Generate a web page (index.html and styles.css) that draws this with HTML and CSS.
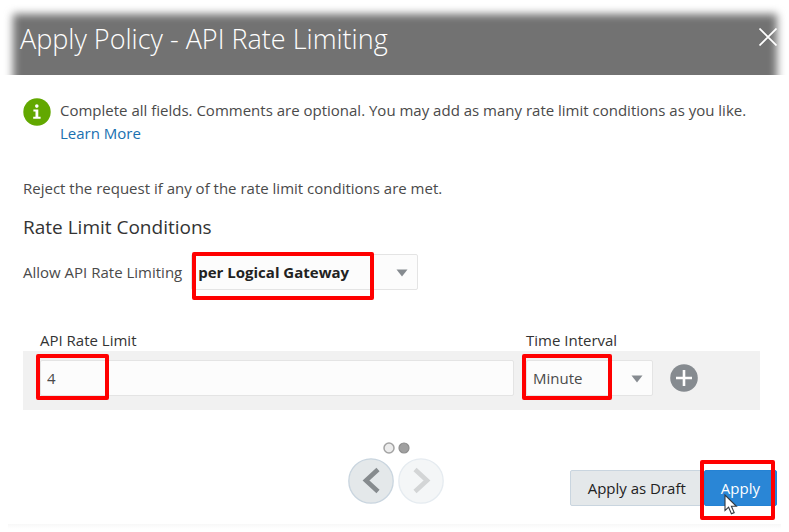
FILE: index.html
```html
<!DOCTYPE html>
<html lang="en">
<head>
<meta charset="utf-8">
<title>Apply Policy - API Rate Limiting</title>
<link rel="stylesheet" href="styles.css">
</head>
<body>
<div class="dialog" role="dialog" aria-labelledby="title">
  <header class="header">
    <h1 class="title" id="title">Apply Policy - API Rate Limiting</h1>
    <button class="close" type="button" aria-label="Close">
      <svg width="18" height="18" viewBox="0 0 18 18"><path d="M0.5 0.5 17.5 17.5M17.5 0.5 0.5 17.5" stroke="#fff" stroke-width="1.7" fill="none"/></svg>
    </button>
  </header>

  <main class="content">
    <div class="note">
      <svg class="info" width="28" height="28" viewBox="0 0 28 28"><circle cx="14" cy="14" r="13.7" fill="#62a800"/><path d="M10.4 11.4H15.3V18.7H17.6V20.8H10.2V18.7H12.5V13.4H10.4Z" fill="#fff"/><circle cx="13.8" cy="8.1" r="1.8" fill="#fff"/></svg>
      <p class="note-text">Complete all fields. Comments are optional. You may add as many rate limit conditions as you like.<br><a class="link" href="#">Learn More</a></p>
    </div>

    <p class="rule">Reject the request if any of the rate limit conditions are met.</p>
    <h2 class="section">Rate Limit Conditions</h2>

    <div class="scope">
      <label for="scope">Allow API Rate Limiting</label>
      <div class="field field-scope">
        <select class="control strong" id="scope"><option>per Logical Gateway</option></select>
        <svg class="arrow" width="12" height="8" viewBox="0 0 12 8"><path d="M0.5 0.5H11.5L6 7.5Z" fill="#868b90"/></svg>
        <span class="mark mark-scope"></span>
      </div>
    </div>

    <div class="limits-head">
      <label for="limit">API Rate Limit</label>
      <label for="interval">Time Interval</label>
    </div>
    <div class="limits-row">
      <div class="field">
        <input class="control" id="limit" type="text" value="4">
        <span class="mark mark-limit"></span>
      </div>
      <div class="field">
        <select class="control" id="interval"><option>Minute</option></select>
        <svg class="arrow" width="12" height="8" viewBox="0 0 12 8"><path d="M0.5 0.5H11.5L6 7.5Z" fill="#868b90"/></svg>
        <span class="mark mark-interval"></span>
      </div>
      <button class="add" type="button" aria-label="Add condition">
        <svg width="28" height="28" viewBox="0 0 28 28"><circle cx="14" cy="14" r="13.8" fill="#868b90"/><path d="M6 14H22M14 6V22" stroke="#fff" stroke-width="2.6"/></svg>
      </button>
    </div>
  </main>

  <footer class="footer">
    <div class="pager">
      <div class="dots">
        <svg width="27" height="12" viewBox="0 0 27 12"><circle cx="6" cy="6" r="5" fill="#ececec" stroke="#a3a3a3" stroke-width="1.5"/><circle cx="21" cy="6" r="5" fill="#a0a0a0" stroke="#8f8f8f" stroke-width="1.2"/></svg>
      </div>
      <div class="steps">
        <button class="step" type="button" aria-label="Previous">
          <svg width="46" height="46" viewBox="0 0 46 46"><circle cx="23" cy="23" r="22.2" fill="#e4e8ea" stroke="#c9d5df" stroke-width="1.3"/><path d="M30 11.5 18 22.5 30 33.5" fill="none" stroke="#868b8e" stroke-width="4.6"/></svg>
        </button>
        <button class="step" type="button" aria-label="Next" disabled>
          <svg width="46" height="46" viewBox="0 0 46 46"><circle cx="23" cy="23" r="22.2" fill="#f4f6f7" stroke="#e5ebf0" stroke-width="1.3"/><path d="M17 11.5 29 22.5 17 33.5" fill="none" stroke="#d3d5d6" stroke-width="4.6"/></svg>
        </button>
      </div>
    </div>
    <div class="actions">
      <button class="btn" type="button">Apply as Draft</button>
      <div class="field">
        <button class="btn primary" type="button">Apply</button>
        <span class="mark mark-apply"></span>
        <svg class="cursor" width="14" height="21" viewBox="0 0 14 21"><path d="M1 1V16.5L4.6 13.2 7.4 19.8 10.2 18.6 7.4 12.3H12.4Z" fill="#fff" stroke="#33383f" stroke-width="1.1"/></svg>
      </div>
    </div>
  </footer>
  <div class="edge"></div>
</div>
</body>
</html>
```

FILE: styles.css
```css
* {
  box-sizing: border-box;
}

body {
  margin: 0;
  background: #fff;
  color: #4a4a4a;
  font: 15px/23px "Open Sans", "Noto Sans", sans-serif;
}

h1, h2, p {
  margin: 0;
  font-weight: 400;
}

button {
  padding: 0;
  border: 0;
  background: none;
  font: inherit;
}

svg {
  display: block;
}

.header {
  position: relative;
  display: flex;
  justify-content: space-between;
  height: 75px;
  padding: 19px 12px 0 20px;
  overflow: hidden;
}

.header::before {
  content: "";
  position: absolute;
  inset: 14px 12px -20px 13px;
  background: #727272;
  filter: blur(4px);
}

.title {
  position: relative;
  color: #fff;
  font-size: 27px;
  font-weight: 300;
  line-height: 40px;
}

.close {
  position: relative;
  height: 18px;
  margin-top: 9px;
}

.content {
  padding: 23px 29px 0 23px;
}

.note {
  display: flex;
  gap: 9px;
}

.info {
  flex: none;
}

.note-text {
  padding-top: 1px;
}

.link {
  color: #1a70b0;
  text-decoration: none;
}

.rule {
  margin-top: 32px;
}

.section {
  margin-top: 12px;
  color: #333;
  font-size: 19px;
  line-height: 30px;
}

.scope {
  display: flex;
  align-items: center;
  gap: 9px;
  margin-top: 12px;
}

.field {
  position: relative;
}

.field-scope {
  width: 227px;
}

.control {
  display: block;
  appearance: none;
  width: 100%;
  height: 36px;
  padding: 0 6px;
  border: 1px solid #e4e4e4;
  border-radius: 2px;
  background: #fcfcfc;
  color: #4a4a4a;
  font: inherit;
}

.strong {
  color: #222;
  font-weight: 700;
}

.arrow {
  position: absolute;
  top: 15px;
  right: 10px;
}

.mark {
  position: absolute;
  border: 4px solid #f00;
  border-radius: 2px;
  pointer-events: none;
}

.mark-scope {
  inset: -2px 44px -10px 1px;
}

.mark-limit {
  inset: -6px auto -4px -4px;
  width: 73px;
}

.mark-interval {
  inset: -6px 41px -4px -4px;
}

.mark-apply {
  inset: -10px 2px -14px -4px;
}

.limits-head,
.limits-row {
  display: grid;
  grid-template-columns: 1fr 127px 33px;
  column-gap: 12px;
  padding: 0 62px 0 17px;
}

.limits-head {
  margin-top: 40px;
  color: #333;
  line-height: 21px;
}

.limits-row {
  align-items: center;
  padding-top: 9px;
  padding-bottom: 14px;
  background: #f1f1f1;
}

.add {
  justify-self: end;
}

.footer {
  display: grid;
  grid-template-columns: 1fr auto 1fr;
  margin-top: 32px;
  padding: 0 12px 0 15px;
}

.pager {
  grid-column: 2;
}

.dots {
  display: flex;
  justify-content: center;
}

.steps {
  display: flex;
  gap: 4px;
  margin-top: 4px;
}

.actions {
  display: flex;
  justify-content: flex-end;
  align-items: flex-start;
  padding-top: 28px;
}

.btn {
  display: block;
  height: 36px;
  padding: 0 17px;
  border: 1px solid #c9d5df;
  border-radius: 2px;
  background: #e4e8ea;
  color: #222;
  white-space: nowrap;
}

.primary {
  padding: 0 16px;
  border-color: #2482d4;
  background: #2a86d6;
  color: #fff;
}

.cursor {
  position: absolute;
  top: 24px;
  left: 20px;
}

.edge {
  height: 5px;
  margin: 18px 8px 0;
  background: linear-gradient(#f8f8f8, #fff);
}
```
